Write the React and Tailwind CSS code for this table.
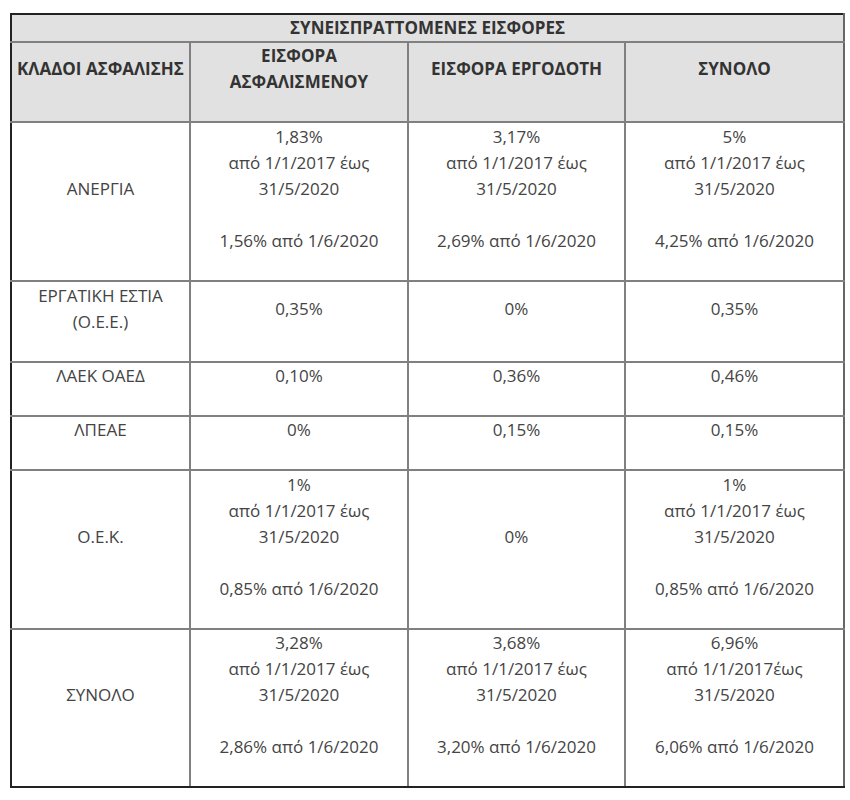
const rows = [
  {
    label: ["ΑΝΕΡΓΙΑ"],
    h: "h-[159px]",
    cells: [
      ["1,83%", "από 1/1/2017 έως", "31/5/2020", "", "1,56% από 1/6/2020"],
      ["3,17%", "από 1/1/2017 έως", "31/5/2020", "", "2,69% από 1/6/2020"],
      ["5%", "από 1/1/2017 έως", "31/5/2020", "", "4,25% από 1/6/2020"],
    ],
  },
  {
    label: ["ΕΡΓΑΤΙΚΗ ΕΣΤΙΑ", "(Ο.Ε.Ε.)"],
    h: "h-[81px]",
    cells: [["0,35%"], ["0%"], ["0,35%"]],
  },
  {
    label: ["ΛΑΕΚ ΟΑΕΔ"],
    h: "h-[53px]",
    cells: [["0,10%"], ["0,36%"], ["0,46%"]],
  },
  {
    label: ["ΛΠΕΑΕ"],
    h: "h-[52px]",
    cells: [["0%"], ["0,15%"], ["0,15%"]],
  },
  {
    label: ["Ο.Ε.Κ."],
    h: "h-[159px]",
    cells: [
      ["1%", "από 1/1/2017 έως", "31/5/2020", "", "0,85% από 1/6/2020"],
      ["0%"],
      ["1%", "από 1/1/2017 έως", "31/5/2020", "", "0,85% από 1/6/2020"],
    ],
  },
  {
    label: ["ΣΥΝΟΛΟ"],
    h: "h-[158px]",
    cells: [
      ["3,28%", "από 1/1/2017 έως", "31/5/2020", "", "2,86% από 1/6/2020"],
      ["3,68%", "από 1/1/2017 έως", "31/5/2020", "", "3,20% από 1/6/2020"],
      ["6,96%", "από 1/1/2017έως", "31/5/2020", "", "6,06% από 1/6/2020"],
    ],
  },
]

const Lines = ({ lines }) =>
  lines.map((l, i) => (
    <div key={i} className="h-[26px]">
      {l}
    </div>
  ))

const cellCls = "border-2 border-[#808080] px-1 pt-0 pb-[26px] align-middle text-center"

export default function App() {
  return (
    <div className="bg-white w-[850px] h-[800px] pt-[13px] pl-[10px]" style={{ fontFamily: '"Open Sans", "Noto Sans", sans-serif' }}>
      <table className="table-fixed border-collapse w-[833px] text-[17px] leading-[26px] text-[#444] border-2 border-[#222] border-r-[#666]">
        <colgroup>
          <col className="w-[179px]" />
          <col className="w-[218px]" />
          <col className="w-[217px]" />
          <col className="w-[219px]" />
        </colgroup>
        <thead className="bg-[#e1e1e1] text-[#333] font-bold">
          <tr className="h-[28px]">
            <th colSpan={4} className="border-2 border-[#808080] border-t-[#222] border-l-[#222] border-r-[#666] px-2 py-0 text-center font-bold">
              ΣΥΝΕΙΣΠΡΑΤΤΟΜΕΝΕΣ ΕΙΣΦΟΡΕΣ
            </th>
          </tr>
          <tr className="h-[80px]">
            <th className={cellCls + " font-bold border-l-[#222] px-0"}>ΚΛΑΔΟΙ ΑΣΦΑΛΙΣΗΣ</th>
            <th className={cellCls + " font-bold"}>
              <Lines lines={["ΕΙΣΦΟΡΑ", "ΑΣΦΑΛΙΣΜΕΝΟΥ"]} />
            </th>
            <th className={cellCls + " font-bold"}>ΕΙΣΦΟΡΑ ΕΡΓΟΔΟΤΗ</th>
            <th className={cellCls + " font-bold border-r-[#666]"}>ΣΥΝΟΛΟ</th>
          </tr>
        </thead>
        <tbody>
          {rows.map((r, i) => (
            <tr key={i} className={r.h}>
              <td className={cellCls + " border-l-[#222]" + (i === rows.length - 1 ? " border-b-[#222]" : "")}>
                <Lines lines={r.label} />
              </td>
              {r.cells.map((c, j) => (
                <td
                  key={j}
                  className={
                    cellCls +
                    (j === 2 ? " border-r-[#666]" : "") +
                    (i === rows.length - 1 ? " border-b-[#222]" : "")
                  }
                >
                  <Lines lines={c} />
                </td>
              ))}
            </tr>
          ))}
        </tbody>
      </table>
    </div>
  )
}
